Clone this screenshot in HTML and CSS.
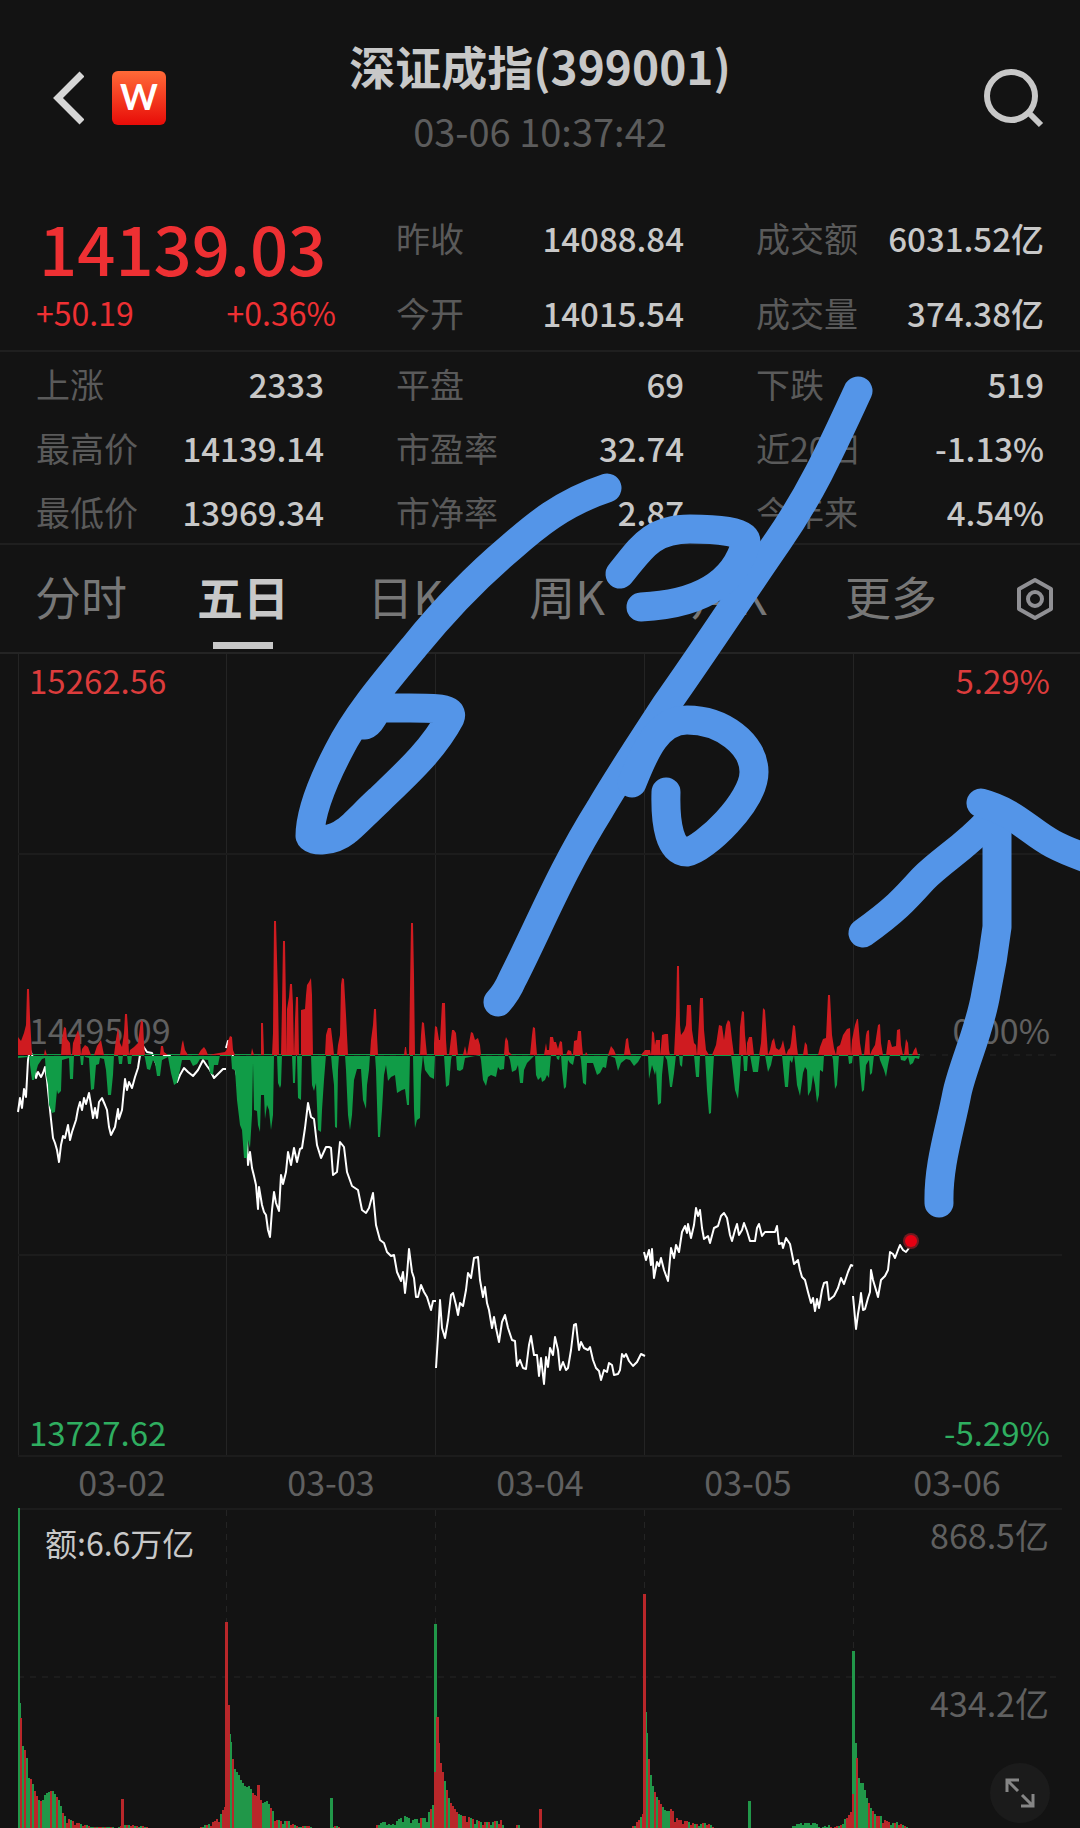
FILE: index.html
```html
<!DOCTYPE html>
<html lang="zh-CN">
<head>
<meta charset="utf-8">
<meta name="viewport" content="width=device-width, initial-scale=1">
<title>深证成指(399001)</title>
<link rel="stylesheet" href="styles.css">
</head>
<body>
<main class="page">
  <header class="topbar">
    <div class="topbar-left">
      <button class="icon-button" type="button" aria-label="返回">
        <svg width="32" height="54" viewBox="0 0 32 54"><path d="M30 3 L6 27 L30 51" fill="none" stroke="#d6d6d6" stroke-width="7"/></svg>
      </button>
      <span class="brand">W</span>
    </div>
    <div class="heading">
      <h1>深证成指(399001)</h1>
      <time>03-06 10:37:42</time>
    </div>
    <button class="icon-button search" type="button" aria-label="搜索">
      <svg width="60" height="60" viewBox="0 0 60 60" fill="none" stroke="#c8c8c8" stroke-width="6"><circle cx="27" cy="28" r="24"/><path d="M45 45 L57 57"/></svg>
    </button>
  </header>

  <section class="quote">
    <div class="price">
      <strong>14139.03</strong>
      <div class="change"><span>+50.19</span><span>+0.36%</span></div>
    </div>
    <dl class="stats">
      <div><dt>昨收</dt><dd>14088.84</dd></div>
      <div><dt>成交额</dt><dd>6031.52亿</dd></div>
      <div><dt>今开</dt><dd>14015.54</dd></div>
      <div><dt>成交量</dt><dd>374.38亿</dd></div>
    </dl>
  </section>

  <dl class="stats breadth">
    <div><dt>上涨</dt><dd>2333</dd></div>
    <div><dt>平盘</dt><dd>69</dd></div>
    <div><dt>下跌</dt><dd>519</dd></div>
    <div><dt>最高价</dt><dd>14139.14</dd></div>
    <div><dt>市盈率</dt><dd>32.74</dd></div>
    <div><dt>近20日</dt><dd>-1.13%</dd></div>
    <div><dt>最低价</dt><dd>13969.34</dd></div>
    <div><dt>市净率</dt><dd>2.87</dd></div>
    <div><dt>今年来</dt><dd>4.54%</dd></div>
  </dl>

  <nav class="tabs">
    <button type="button">分时</button>
    <button type="button" class="active" aria-current="true">五日</button>
    <button type="button">日K</button>
    <button type="button">周K</button>
    <button type="button">月K</button>
    <button type="button">更多</button>
    <button type="button" class="settings" aria-label="设置">
      <svg width="42" height="44" viewBox="0 0 42 44" fill="none" stroke="#909094" stroke-width="4" stroke-linejoin="round"><path d="M21 3 L37 12 V32 L21 41 L5 32 V12 Z"/><circle cx="21" cy="22" r="7"/></svg>
    </button>
  </nav>

  <svg class="chart" viewBox="0 654 1080 854" role="img" aria-label="五日走势">
    <g class="grid">
      <path d="M18.500 654V1456M226.500 654V1456M435.500 654V1456M644.500 654V1456M853.500 654V1456"/>
      <path class="row" d="M18 854H1062M18 1255H1062M18 1456H1062"/>
      <path class="row dashed" d="M18 1055H1062"/>
    </g>
    <g class="muted">
      <text x="29" y="1044">14495.09</text>
      <text x="1050" y="1044" text-anchor="end">0.00%</text>
    </g>
    <g id="lines" class="line"></g>
    <path id="sell" class="down-area"/>
    <path id="buy" class="up-area"/>
    <circle cx="911" cy="1241" r="8" fill="#701a20"/>
    <circle cx="911" cy="1241" r="6" fill="#e60012"/>
    <text class="up" x="29" y="694">15262.56</text>
    <text class="up" x="1050" y="694" text-anchor="end">5.29%</text>
    <text class="down" x="29" y="1446">13727.62</text>
    <text class="down" x="1050" y="1446" text-anchor="end">-5.29%</text>
    <g class="muted" text-anchor="middle">
      <text x="122" y="1496">03-02</text>
      <text x="331" y="1496">03-03</text>
      <text x="540" y="1496">03-04</text>
      <text x="748" y="1496">03-05</text>
      <text x="957" y="1496">03-06</text>
    </g>
  </svg>

  <div class="volume">
    <svg class="chart" viewBox="0 1508 1080 320" role="img" aria-label="成交额">
      <g class="grid">
        <path class="row" d="M18 1509H1062"/>
        <path class="dashed" d="M226.500 1510V1828M435.500 1510V1828M644.500 1510V1828M853.500 1510V1828"/>
        <path class="row dashed" d="M18 1677H1062"/>
      </g>
      <path id="vol-green" class="down-bars"/>
      <path id="vol-red" class="up-bars"/>
      <text class="plain" x="45" y="1556">额:6.6万亿</text>
      <g class="muted" text-anchor="end">
        <text x="1049" y="1549">868.5亿</text>
        <text x="1049" y="1717">434.2亿</text>
      </g>
    </svg>
    <button class="expand" type="button" aria-label="全屏">
      <svg width="30" height="30" viewBox="0 0 30 30" fill="none" stroke="#868686" stroke-width="3"><path d="M2 14V2H14M2 2L13 13M16 28H28V16M28 28L17 17"/></svg>
    </button>
  </div>

  <svg class="ink" viewBox="0 0 1080 1828" aria-hidden="true">
    <path d="M607 488 C562 503 535 526 510 548 C478 575 448 605 414 647 C380 688 355 718 338 752 C322 783 310 815 310 836 C312 842 332 842 346 831 C352 827 365 813 379 800 C405 775 433 750 450 718 C455 706 430 708 385 708 C372 709 374 722 365 725"/>
    <path d="M858 391 C832 447 812 492 778 541 C742 593 705 650 666 705 C640 745 618 778 600 809 C560 873 540 925 512 980 Q507 992 498 1002"/>
    <path d="M620 574 C640 550 650 529 690 529 C715 529 746 531 746 542 C738 575 710 604 641 607"/>
    <path d="M632 783 C645 750 658 720 687 720 C722 720 754 744 754 772 C754 802 704 849 687 852 C670 852 665 825 666 792"/>
    <path d="M939 1203 C938 1165 950 1130 957 1093 C963 1065 980 1030 986 993 Q993 960 997 927 V825"/>
    <path d="M863 933 C895 910 904 900 923 879 C942 860 965 847 988 822"/>
    <path d="M981 803 C1015 812 1030 832 1053 844 Q1068 852 1100 863"/>
  </svg>
</main>
<script src="chart.js"></script>
</body>
</html>
```
FILE: styles.css
```css
* { box-sizing: border-box; }

body {
  margin: 0;
  background: #131313;
  color: #c8c8c8;
  font-family: "Noto Sans CJK SC", "Noto Sans", sans-serif;
  font-size: 34px;
  line-height: 48px;
}

.page { position: relative; overflow: hidden; }

button {
  padding: 0;
  border: 0;
  background: none;
  color: inherit;
  font: inherit;
  cursor: pointer;
}

svg { display: block; }

/* header */
.topbar {
  display: grid;
  grid-template-columns: 1fr auto 1fr;
  align-items: center;
  padding: 39px 36px 0;
}
.topbar-left { display: flex; align-items: center; gap: 28px; padding-left: 16px; }
.brand {
  width: 54px;
  height: 54px;
  border-radius: 6px;
  background: linear-gradient(#ff6a38, #e80c08);
  color: #fff;
  font: 700 36px/50px Lato, sans-serif;
  text-align: center;
}
.heading { padding-bottom: 6px; text-align: center; }
.heading h1 { margin: 0; font-size: 46px; line-height: 52px; font-weight: 700; }
.heading time {
  display: block;
  margin-top: 20px;
  color: #5c5c5c;
  font-size: 38px;
  line-height: 40px;
}
.search { justify-self: end; }

/* quote figures */
.quote {
  display: grid;
  grid-template-columns: minmax(0, 288fr) minmax(0, 648fr);
  column-gap: 72px;
  padding: 57px 36px 13px;
  border-bottom: 2px solid #1f1f1f;
}
.price { color: #ee3033; }
.price strong {
  display: block;
  margin-bottom: 8px;
  padding-left: 3px;
  font-size: 67px;
  line-height: 66px;
  font-weight: 500;
}
.change {
  display: flex;
  justify-content: space-between;
  margin-right: -12px;
  font-size: 32px;
}

.stats {
  display: grid;
  grid-template-columns: repeat(2, minmax(0, 1fr));
  gap: 27px 72px;
  margin: 0;
}
.stats div { display: flex; justify-content: space-between; white-space: nowrap; }
.stats dt { color: #5a5a5a; }
.stats dd { margin: 0; font-size: 33px; font-weight: 500; }
.breadth {
  grid-template-columns: repeat(3, minmax(0, 1fr));
  row-gap: 16px;
  padding: 8px 36px 7px;
  border-bottom: 2px solid #1f1f1f;
}

/* period tabs */
.tabs {
  display: grid;
  grid-template-columns: repeat(6, 15%) 1fr;
  border-bottom: 2px solid #242424;
}
.tabs button {
  position: relative;
  height: 107px;
  padding-bottom: 7px;
  color: #777;
  font-size: 46px;
}
.tabs .active { color: #c8c8c8; font-weight: 700; }
.tabs .active::after {
  content: "";
  position: absolute;
  left: 50%;
  bottom: 3px;
  width: 60px;
  height: 7px;
  margin-left: -30px;
  background: #c8c8c8;
}
.tabs .settings { display: flex; align-items: center; padding: 0 0 0 42px; }

/* charts */
.chart { width: 100%; height: auto; font-size: 34px; }
.grid path { fill: none; stroke: #242424; stroke-width: 1; }
.grid .row { stroke: #1c1c1c; stroke-width: 2; }
.grid .dashed { stroke-dasharray: 6 6; }
.muted { fill: #606060; }
.plain { fill: #c8c8c8; font-size: 32px; }
.up { fill: #dc3c3c; }
.down { fill: #2fae60; }
.up, .down { font-size: 33px; }
.line { fill: none; stroke: #fff; stroke-width: 2; stroke-linejoin: round; }
.up-area { fill: #cf1b20; }
.down-area { fill: #109c47; }
.up-bars { fill: #b9272a; }
.down-bars { fill: #219749; }

.volume { position: relative; }
.expand {
  position: absolute;
  right: 30px;
  bottom: 5px;
  display: flex;
  align-items: center;
  justify-content: center;
  width: 60px;
  height: 60px;
  border-radius: 50%;
  background: #1b1b1b;
}

/* hand-drawn marks above the page */
.ink {
  position: absolute;
  top: 0;
  left: 0;
  width: 100%;
  height: auto;
  pointer-events: none;
  fill: none;
  stroke: #5495e8;
  stroke-width: 29;
  stroke-linecap: round;
  stroke-linejoin: round;
}
```
FILE: chart.js
```js
// Index value per trading day, as x,y pairs.
const days = [
  "18,1112 20,1098 22,1108 24,1089 26,1097 28,1060 30,1050 34,1060 36,1078 38,1072 41,1077 43,1073 45,1067 47,1080 50,1110 53,1138 55,1143 57,1150 59,1162 61,1145 63,1136 65,1138 68,1125 70,1140 72,1132 76,1120 78,1109 80,1102 82,1110 84,1098 86,1104 89,1093 91,1105 93,1118 95,1108 97,1118 99,1102 102,1098 105,1105 107,1110 109,1127 111,1135 115,1127 118,1109 119,1119 122,1110 125,1079 127,1090 129,1082 132,1088 135,1077 138,1068 140,1055 143,1046 147,1052 152,1053 157,1066 160,1060 165,1055 170,1056 174,1070 177,1082 180,1075 184,1068 188,1072 193,1076 198,1070 203,1060 207,1066 210,1070 214,1078 219,1073 223,1069 226,1069",
  "226,1048 228,1041 230,1045 232,1052 240,1090 247,1140 248,1165 250,1152 252,1168 254,1176 256,1185 258,1209 259,1187 262,1205 264,1212 266,1215 268,1230 270,1237 272,1210 274,1192 276,1203 279,1211 281,1175 283,1184 286,1172 288,1152 291,1165 294,1148 297,1162 300,1149 302,1148 305,1128 308,1103 311,1117 314,1119 317,1145 321,1158 326,1147 329,1147 331,1148 333,1175 337,1172 340,1142 344,1147 347,1172 352,1186 358,1190 362,1210 366,1213 369,1208 373,1193 376,1225 380,1240 384,1243 387,1252 391,1256 394,1255 397,1272 401,1281 403,1272 405,1293 407,1275 409,1249 412,1272 414,1278 416,1297 418,1297 421,1285 424,1292 427,1297 431,1310 433,1301 436,1301",
  "436,1368 438,1336 440,1300 442,1328 445,1338 448,1320 451,1295 453,1293 456,1305 458,1315 460,1303 463,1306 466,1290 468,1273 471,1278 474,1258 478,1257 480,1280 483,1297 485,1287 487,1303 489,1310 492,1328 494,1317 496,1328 499,1342 502,1322 505,1315 508,1328 512,1340 515,1341 517,1366 520,1360 523,1368 526,1369 529,1345 531,1336 534,1355 537,1355 539,1376 541,1358 544,1384 546,1357 548,1367 550,1348 553,1355 555,1337 558,1350 560,1370 563,1362 566,1370 568,1368 571,1350 574,1325 576,1324 579,1350 581,1342 584,1348 588,1350 590,1347 593,1360 596,1368 599,1371 601,1380 604,1370 607,1372 609,1363 612,1365 614,1375 618,1374 620,1370 622,1354 624,1357 626,1354 629,1361 633,1366 637,1362 641,1354 645,1356",
  "644,1252 646,1260 649,1250 651,1265 652,1249 654,1278 657,1262 659,1266 661,1258 664,1270 668,1281 671,1248 674,1258 676,1245 679,1252 682,1232 685,1226 687,1233 688,1224 691,1238 694,1225 696,1208 698,1216 700,1210 702,1228 704,1239 708,1236 710,1243 714,1228 718,1226 721,1216 724,1213 727,1218 730,1235 732,1241 735,1230 737,1224 739,1235 742,1230 744,1223 747,1231 750,1241 755,1241 757,1228 759,1224 762,1236 765,1232 770,1232 775,1232 777,1226 779,1244 782,1243 783,1248 786,1238 790,1244 794,1264 798,1260 800,1270 802,1277 805,1280 808,1292 811,1303 813,1298 815,1311 817,1299 819,1308 822,1290 824,1283 827,1282 829,1300 834,1296 838,1288 841,1278 844,1284 848,1272 851,1265 853,1266",
  "853,1296 855,1318 856,1329 858,1314 860,1302 861,1293 863,1310 865,1309 868,1298 870,1292 871,1270 873,1280 876,1290 878,1297 881,1280 885,1276 888,1270 890,1252 893,1254 895,1258 898,1250 900,1245 903,1250 906,1252 909,1248 911,1242"
];
document.getElementById("lines").innerHTML =
  days.map(points => `<polyline points="${points}"/>`).join("");

// Momentum bars, as x:height pairs measured from the zero line.
const buy = "18:18 21:14 24:22 26:30 27:66 29:66 30:38 32:0 44:0 45:6 47:0 61:0 62:16 64:28 66:27 67:16 70:12 71:0 72:0 73:12 76:20 78:25 80:18 81:0 82:6 85:10 88:8 91:0 94:0 97:9 101:15 104:0 114:0 116:16 118:28 120:12 122:8 124:22 125:41 127:41 128:26 129:0 130:5 134:8 138:12 140:28 141:35 143:33 144:12 145:0 160:0 161:9 163:9 164:3 168:0 180:0 182:12 183:15 185:5 188:0 198:0 201:5 204:8 206:5 208:0 219:2 225:3 227:6 228:14 230:19 232:18 233:5 235:0 251:0 252:7 254:0 261:0 261:32 263:32 264:0 272:0 273:22 274:134 276:134 278:60 279:0 281:0 282:50 283:114 285:114 286:50 287:0 287:46 289:58 290:71 292:71 293:50 294:0 295:35 296:58 298:58 299:0 301:0 301:45 305:46 306:60 307:70 309:73 311:77 312:60 313:0 325:0 326:20 328:27 331:27 333:10 334:0 337:0 338:10 340:20 341:70 342:77 344:76 346:40 348:0 370:0 371:15 373:30 374:46 376:46 377:20 378:0 404:0 405:8 406:8 407:0 409:0 411:132 413:132 414:80 415:0 420:0 421:20 422:33 424:32 426:10 427:0 434:0 434:12 435:29 437:28 439:15 440:15 442:52 445:52 446:15 447:0 449:0 452:25 454:25 456:22 458:0 463:0 465:9 467:0 469:12 471:23 473:22 475:15 478:17 480:10 481:0 504:0 505:14 506:18 508:14 509:3 512:0 530:0 532:20 533:28 535:27 536:12 537:0 544:0 546:12 547:5 549:5 550:18 553:18 554:13 556:13 558:6 560:14 562:13 563:0 566:0 568:5 571:4 572:0 573:0 574:14 577:15 578:24 581:24 582:10 583:0 585:0 586:3 588:0 608:0 611:9 614:5 616:0 624:0 626:16 628:17 629:8 631:0 641:0 645:5 650:5 651:0 652:24 654:22 655:10 656:15 660:15 660:0 661:8 662:20 665:21 668:21 669:5 670:0 674:0 676:40 677:89 679:89 680:30 681:20 684:24 686:30 687:50 691:50 692:25 694:12 696:10 697:0 699:35 700:57 703:57 704:25 706:5 709:0 712:0 716:10 719:30 722:29 724:15 726:30 728:35 730:33 732:15 734:0 739:0 740:28 742:44 744:43 745:20 747:0 747:12 749:18 752:18 754:0 759:0 761:12 763:47 765:45 767:15 768:0 770:5 772:14 774:17 776:7 779:5 781:8 783:15 784:10 786:0 788:5 790:7 791:12 793:30 795:29 797:8 798:0 803:0 805:13 807:10 808:0 818:0 820:8 823:16 826:17 828:60 830:60 832:20 834:7 836:0 837:8 840:10 843:20 847:26 850:27 851:0 852:15 855:30 857:36 858:36 860:12 862:0 864:0 866:20 867:24 869:25 870:0 872:5 875:10 878:30 880:31 881:12 883:0 886:0 888:15 890:15 892:8 896:9 897:25 900:26 901:10 903:0 904:0 906:16 908:12 909:0 912:0 914:5 916:8 918:0";
const sell = "18:3 28:2 29:0 30:10 32:25 34:25 36:17 38:10 42:4 45:3 46:20 48:30 49:50 52:58 55:57 57:35 58:39 61:36 62:5 69:3 70:24 73:24 74:0 80:0 81:10 83:10 84:0 85:2 89:3 91:35 94:34 96:10 99:9 100:3 104:4 106:15 108:40 111:40 113:20 114:0 118:0 119:9 122:9 123:0 127:0 128:9 131:9 132:0 144:0 145:3 147:14 150:15 153:5 155:8 157:21 160:21 162:5 168:2 171:18 174:30 177:28 180:15 182:5 190:5 193:11 197:9 200:4 208:5 210:18 213:20 214:10 218:10 220:0 231:0 232:14 235:15 237:45 240:70 242:75 244:103 247:103 248:85 250:93 252:60 253:8 254:55 257:56 258:70 260:77 261:40 264:40 265:64 267:50 269:55 271:75 273:60 274:0 277:0 278:28 280:33 281:30 282:0 292:0 293:28 295:28 296:0 297:0 298:43 301:45 302:0 311:0 312:30 314:36 316:28 318:75 321:77 322:55 324:25 326:0 331:0 332:12 334:30 335:72 337:73 338:15 339:0 345:0 346:15 348:60 350:75 352:60 354:25 357:14 361:14 363:45 366:54 367:30 369:15 370:0 375:0 376:15 378:82 380:82 382:55 384:20 386:10 388:26 391:22 395:20 397:38 402:35 405:34 407:50 409:50 410:0 413:0 414:55 415:73 417:65 420:63 421:20 423:0 425:15 430:22 434:24 435:0 444:0 446:32 449:30 451:5 452:0 456:0 457:15 460:16 463:14 465:3 480:0 481:5 483:25 486:31 488:22 491:20 496:22 498:12 500:15 504:14 505:0 508:0 510:5 512:17 516:15 518:10 520:28 523:28 524:15 527:8 531:4 535:0 536:20 538:25 541:22 542:27 545:25 547:20 549:23 551:0 556:0 557:4 559:5 560:0 561:0 562:15 564:34 566:32 568:5 570:8 573:10 575:0 580:0 581:5 583:28 586:30 587:8 593:8 597:20 600:18 603:12 606:13 608:0 615:3 618:16 621:8 626:4 630:5 634:11 638:7 642:0 648:0 649:24 652:10 655:20 656:15 658:50 661:48 662:20 664:0 667:5 670:32 672:32 674:18 676:0 679:0 680:10 682:12 683:0 694:0 696:22 699:22 700:0 705:0 707:35 709:59 711:58 712:35 714:0 731:0 732:8 735:35 738:44 740:20 741:0 743:0 744:16 747:16 748:0 750:0 753:17 758:17 760:0 765:0 768:17 771:10 773:0 782:0 785:32 788:32 790:5 792:8 794:0 795:8 797:30 800:41 803:18 805:12 807:15 808:41 811:35 813:20 815:30 817:48 819:40 820:15 823:17 824:0 832:0 833:5 835:34 837:30 839:0 848:0 849:9 852:8 853:0 859:0 860:15 862:37 864:35 866:10 869:5 870:20 872:18 874:0 879:0 880:5 884:15 886:22 888:10 890:0 900:0 901:5 905:6 908:2 910:10 913:8 915:3 919:4 920:0";
const area = (data, sign) => {
  const pts = data.split(" ").map(p => p.split(":").map(Number));
  return "M18 1055" + pts.map(([x, h]) => `L${x} ${1055 - sign * h}`).join("") + "V1055Z";
};
document.getElementById("buy").setAttribute("d", area(buy, 1));
document.getElementById("sell").setAttribute("d", area(sell, -1) + "M18 1054H920V1056H18Z");

// Turnover: envelope of bar heights, then single bars as x:height:colour.
const envelope = "20:110 21:84 24:78 26:70 28:50 31:48 33:40 36:32 38:28 41:26 44:33 48:36 52:37 55:32 58:28 60:22 62:15 65:10 70:8 75:5 82:4 90:1 100:1 110:1 115:0 124:3 140:2 150:0 198:0 204:3 210:4 215:8 220:14 224:21 227:120 229:94 231:78 233:60 237:55 241:46 245:40 249:42 251:36 258:30 262:25 266:27 269:22 273:15 276:8 282:7 289:7 293:3 300:1 307:3 312:0 331:0 335:3 340:0 374:0 378:5 383:6 390:3 397:8 405:12 412:8 418:10 425:10 432:23 437:105 438:85 440:65 443:52 446:38 449:26 453:20 457:14 462:12 470:10 480:6 490:6 500:8 503:0 515:0 517:6 519:0 630:0 634:4 638:8 642:14 646:95 647:78 649:60 651:45 655:33 658:28 661:22 665:17 669:17 671:20 674:12 678:8 684:7 690:6 695:4 700:4 706:6 711:2 714:0 790:0 793:3 800:5 808:5 815:5 819:0 828:3 831:0 840:3 842:7 846:10 851:17 855:85 857:54 859:45 862:45 864:38 866:30 870:20 875:12 880:12 885:7 892:5 898:6 903:2 908:0"
  .split(" ").map(p => p.split(":").map(Number));
const spikes = "18:320:g 19:125:g 122:29:r 226:206:r 228:123:r 229:94:g 258:43:r 331:30:g 435:204:g 437:111:r 540:19:r 644:234:r 645:116:g 749:27:g 853:177:g 855:85:g";
// Stretches where one colour dominates.
const runs = [[46, 54, "g"], [68, 78, "r"], [214, 226, "r"], [234, 248, "g"], [249, 257, "r"], [263, 273, "g"], [378, 432, "g"], [438, 442, "r"], [449, 456, "r"], [460, 470, "r"], [636, 644, "r"], [662, 668, "g"], [671, 684, "r"], [790, 831, "g"], [846, 853, "r"], [860, 866, "g"], [876, 890, "r"]];
const bars = { r: "", g: "" };
const addBar = (x, h, c, w) => { bars[c] += `M${x} 1828v${-h}h${w}v${h}z`; };
let seg = 0;
for (let x = 20, i = 0; x < 908; x += 2, i++) {
  while (envelope[seg + 1][0] <= x && seg < envelope.length - 2) seg++;
  const [x0, h0] = envelope[seg];
  const [x1, h1] = envelope[seg + 1];
  const h = Math.round(h0 + (h1 - h0) * (x - x0) / (x1 - x0));
  if (h < 1) continue;
  const run = runs.find(r => x >= r[0] && x <= r[1]);
  const c = run && i % 5 ? run[2] : (i * 7 + (i >> 2)) % 2 ? "g" : "r";
  addBar(x, i % 4 === 3 && h < 14 ? Math.ceil(h / 2) : h, c, 2);
}
spikes.split(" ").forEach(s => {
  const [x, h, c] = s.split(":");
  addBar(+x - (x === "18" ? 0 : 1), +h, c, x === "18" ? 2 : 3);
});
document.getElementById("vol-red").setAttribute("d", bars.r);
document.getElementById("vol-green").setAttribute("d", bars.g);
```
